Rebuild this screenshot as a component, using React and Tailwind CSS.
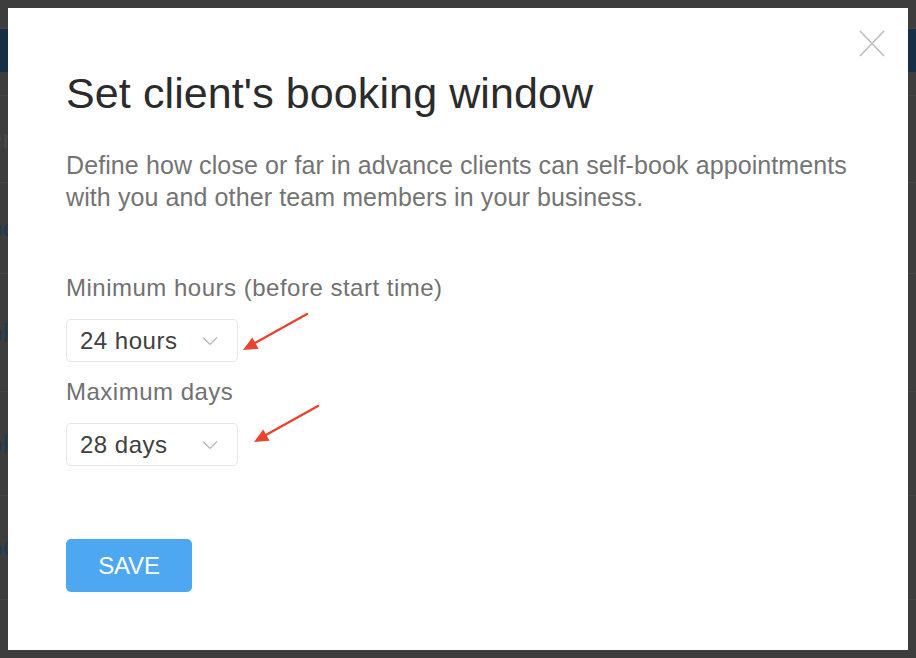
import React from "react";

const rows = [
  { h: "h-[24px]", mark: null },
  { h: "h-[87px]", mark: "er" },
  { h: "h-[91px]", mark: "oe" },
  { h: "h-[118px]", mark: "ol" },
  { h: "h-[104px]", mark: "ol" },
  { h: "h-[104px]", mark: "oC" },
];

const Chevron = () => (
  <svg width="16" height="10" viewBox="0 0 16 10" fill="none" className="block">
    <path d="M1 1.5 L8 8.5 L15 1.5" stroke="#b3b3b3" strokeWidth="1.2" />
  </svg>
);

const Select = ({ value }) => (
  <div className="flex items-center justify-between w-[172px] h-[43px] pl-[13px] pr-[19px] border border-[#e6e6e6] rounded-[5px] bg-white">
    <span className="text-[24px] leading-[30px] tracking-[0.5px] text-[#404040]">{value}</span>
    <Chevron />
  </div>
);

// red annotation arrow, tip at lower-left
const Arrow = ({ className }) => (
  <svg width="80" height="50" viewBox="0 0 80 50" fill="none" className={className}>
    <line x1="69" y1="6" x2="16" y2="35.5" stroke="#e8432d" strokeWidth="2.4" strokeLinecap="round" />
    <path d="M5 42 L14.3 29.4 L20.6 40.8 Z" fill="#e8432d" />
  </svg>
);

const App = () => {
  return (
    <div
      className="relative w-[916px] h-[658px] overflow-hidden bg-[#3d3d3d]"
      style={{ fontFamily: '"Liberation Sans", Arial, sans-serif' }}
    >
      {/* dimmed page behind the modal */}
      <div className="flex flex-col">
        <div className="h-[29px] border-b border-[#444]" />
        <div className="h-[43px] bg-[#162f47]" />
        {rows.map((r, i) => (
          <div key={i} className={`${r.h} flex items-center border-b border-[#474747]`}>
            {r.mark && (
              <span
                className={`text-[26px] leading-none -ml-[12px] ${
                  r.mark === "er" ? "text-[#4a4a4a]" : "text-[#1d3a57]"
                }`}
              >
                {r.mark}
              </span>
            )}
          </div>
        ))}
      </div>

      {/* modal */}
      <div className="absolute left-[8px] top-[8px] w-[900px] h-[642px] bg-white">
        <button className="absolute left-[851px] top-[22px] w-[26px] h-[27px]">
          <svg width="26" height="27" viewBox="0 0 26 27" fill="none" className="block">
            <path d="M1 1 L25 26 M25 1 L1 26" stroke="#bdbdbd" strokeWidth="1.6" />
          </svg>
        </button>

        <div className="pl-[58px] pt-[61px] flex flex-col">
          <h2 className="text-[43px] leading-[48px] text-[#2b2b2b] tracking-[0.1px]">
            Set client's booking window
          </h2>
          <p className="mt-[32px] text-[25px] leading-[32px] tracking-[0.1px] text-[#747474] w-[830px]">
            Define how close or far in advance clients can self-book appointments
            <br />
            with you and other team members in your business.
          </p>

          <label className="mt-[60px] text-[24px] leading-[30px] tracking-[0.5px] text-[#717171]">
            Minimum hours (before start time)
          </label>
          <div className="mt-[16px]">
            <Select value="24 hours" />
          </div>

          <label className="mt-[15px] text-[24px] leading-[30px] tracking-[0.5px] text-[#717171]">
            Maximum days
          </label>
          <div className="mt-[16px]">
            <Select value="28 days" />
          </div>

          <div className="mt-[73px]">
            <button className="w-[126px] h-[53px] rounded-[5px] bg-[#4ea8f1] text-white text-[24px] leading-[50px] tracking-[-0.2px]">
              SAVE
            </button>
          </div>
        </div>

        <Arrow className="absolute left-[230px] top-[300px] pointer-events-none" />
        <Arrow className="absolute left-[241px] top-[392px] pointer-events-none" />
      </div>
    </div>
  );
};

export default App;
